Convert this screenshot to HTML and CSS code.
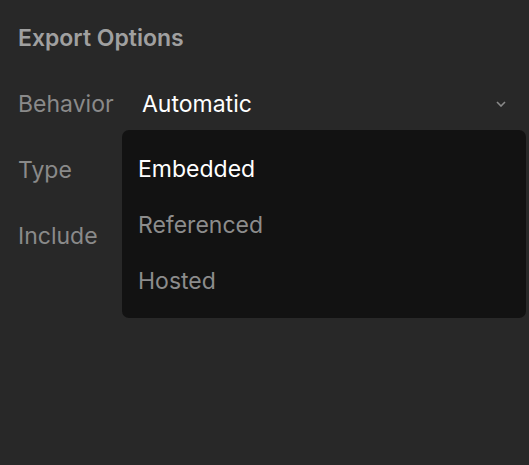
FILE: index.html
```html
<!DOCTYPE html>
<html>
<head>
<meta charset="utf-8">
<link rel="stylesheet" href="styles.css">
</head>
<body>
<div class="panel">
  <h1 class="title">Export Options</h1>
  <div class="row">
    <span class="label">Behavior</span>
    <div class="select">
      <span class="value">Automatic</span>
      <svg class="chev" width="10" height="6" viewBox="0 0 10 6"><path d="M1 1 L5 5 L9 1" fill="none" stroke="#8a8a8a" stroke-width="1.6"/></svg>
      <div class="menu">
        <div class="item active">Embedded</div>
        <div class="item">Referenced</div>
        <div class="item">Hosted</div>
      </div>
    </div>
  </div>
  <div class="row"><span class="label">Type</span></div>
  <div class="row"><span class="label">Include</span></div>
</div>
</body>
</html>
```

FILE: styles.css
```css
html, body {
  margin: 0;
  padding: 0;
  background: #282828;
  width: 529px;
  height: 465px;
  overflow: hidden;
  font-family: Inter, "Noto Sans", sans-serif;
}
.panel {
  padding: 22px 0 0 18px;
}
.title {
  margin: 0;
  font-size: 23px;
  font-weight: 600;
  color: #a0a0a0;
  line-height: 32px;
  height: 32px;
}
.row {
  display: flex;
  align-items: center;
  height: 66px;
}
.row:first-of-type { margin-top: 17px; }
.label {
  width: 124px;
  font-size: 23px;
  color: #8a8a8a;
}
.select {
  position: relative;
  flex: 1;
  display: flex;
  align-items: center;
  justify-content: space-between;
  padding-right: 23px;
}
.value {
  font-size: 23px;
  color: #ffffff;
}
.menu {
  position: absolute;
  left: -20px;
  top: 40px;
  width: 404px;
  background: #121212;
  border-radius: 7px;
  padding: 11px 0 9px;
  z-index: 2;
}
.item {
  height: 56px;
  line-height: 56px;
  padding-left: 16px;
  font-size: 23px;
  color: #8c8c8c;
}
.item.active { color: #ffffff; }
```
